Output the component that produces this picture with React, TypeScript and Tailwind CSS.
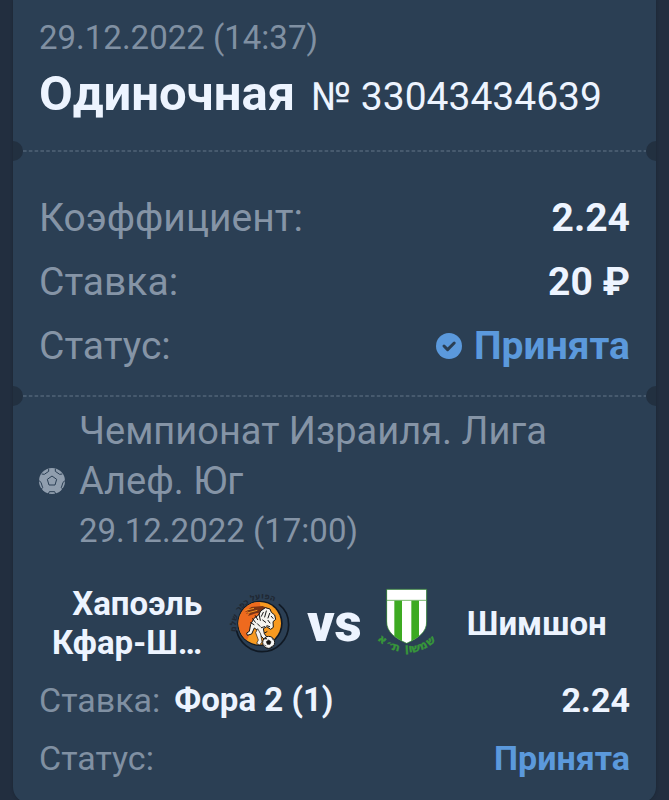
import type { ReactNode } from 'react';

function Divider() {
  return (
    <div className="relative h-5">
      <span className="absolute top-0 -left-2.5 size-5 rounded-full bg-[#223040]" />
      <span className="absolute top-0 -right-2.5 size-5 rounded-full bg-[#223040]" />
      <svg className="absolute inset-x-2.5 top-[9px] h-0.5 w-[calc(100%-20px)]" aria-hidden="true">
        <line x1="0" y1="1" x2="100%" y2="1" stroke="#475a6e" strokeWidth="2" strokeDasharray="3.6 2.2" />
      </svg>
    </div>
  );
}

function CheckBadge() {
  return (
    <svg viewBox="0 0 26 26" className="size-[26px]" aria-hidden="true">
      <circle cx="13" cy="13" r="13" fill="#5b99dc" />
      <path
        d="M8 13l3.6 3.6 6.6-6.6"
        fill="none"
        stroke="#2b3f54"
        strokeWidth="3"
        strokeLinecap="round"
        strokeLinejoin="round"
      />
    </svg>
  );
}

function BallIcon() {
  return (
    <svg viewBox="0 0 78 78" className="size-[26px] shrink-0" aria-hidden="true">
      <circle cx="39" cy="39" r="39" fill="#909eae" />
      <g fill="none" stroke="#2b3f54" strokeWidth="3" strokeLinejoin="round">
        <path d="M39 24l14 10-5 17H30l-5-17z" />
        <path d="M8 18l8 1 13-9 0-8" />
        <path d="M70 18l-8 1-13-9 0-8" />
        <path d="M0 38l6 5 5 16-5 5" />
        <path d="M78 38l-6 5-5 16 5 5" />
        <path d="M28 78l3-7h16l3 7" />
      </g>
    </svg>
  );
}

const homeLetters = [
  { char: 'ם', x: 54, y: 147, angle: -84 },
  { char: 'ל', x: 54, y: 131, angle: -74 },
  { char: 'ש', x: 57, y: 115, angle: -65 },
  { char: 'ר', x: 68, y: 91, angle: -48 },
  { char: 'פ', x: 77, y: 81, angle: -40 },
  { char: 'כ', x: 88, y: 72, angle: -30 },
  { char: 'ל', x: 106, y: 61, angle: -16 },
  { char: 'ע', x: 120, y: 57, angle: -6 },
  { char: 'ו', x: 133, y: 55, angle: 2 },
  { char: 'פ', x: 146, y: 57, angle: 10 },
  { char: 'ה', x: 162, y: 61, angle: 18 },
];

function HomeLogo() {
  return (
    <svg
      viewBox="30 23 198 213"
      className="h-[71px] w-[66px] shrink-0 overflow-visible"
      role="img"
      aria-label="Хапоэль Кфар-Шалем"
    >
      <path
        d="M56 152c8 34 40 62 76 62 44 0 80-36 80-81 0-24-10-46-28-60"
        fill="none"
        stroke="#101924"
        strokeWidth="5"
        strokeLinecap="round"
      />
      <circle cx="126" cy="129" r="68" fill="#101924" />
      <circle cx="125" cy="129" r="64" fill="#f79a20" />
      <path d="M125 65a64 64 0 0 0-38 115l24-54 20-30z" fill="#ee6a1e" />
      <path d="M80 96l20-16 34-3 18 8-18 4 10 6-30 4-24 8 6-10-12 4 8-9z" fill="#7a3414" />
      <path d="M82 90l26-6M88 98l30-8" stroke="#f5941f" strokeWidth="3" />
      <path
        d="M128 92l14-10 14 4 4 10 10 8 3 13-8 7 1 17-8 6-12-8-10 6 3 15 15 20-8 5-17-18-7-14-13-10-8 18-13 4-2-7 8-5 4-21 10-18 14-10z"
        fill="#f6f4ef"
        stroke="#161616"
        strokeWidth="3"
        strokeLinejoin="round"
      />
      <path
        d="M136 96l-6 12M145 92l-5 18M155 99l-5 14M112 106l7 12M104 115l8 11M98 127l10 6M123 101l4 19M134 119l9 7M150 120l6 8M130 142l10-3M118 130l8 8M140 158l7-4M160 108l5 6M147 136l8 3"
        stroke="#161616"
        strokeWidth="3"
        strokeLinecap="round"
      />
      <path d="M119 145l9 16 4 24-7 9-9-5 5-10-8-22z" fill="#f6f4ef" stroke="#161616" strokeWidth="2" />
      <circle cx="152" cy="186" r="18" fill="#f8f8f6" stroke="#161616" strokeWidth="3" />
      <path
        d="M152 179l7 5-3 8h-8l-3-8zM138 177l6-5 3 5M166 180l-4-7M139 194l6 3M157 201l7-5"
        fill="#161616"
        stroke="#161616"
        strokeWidth="2"
      />
      <g className="font-['DejaVu_Sans'] text-[25px] font-bold" fill="#202833" textAnchor="middle">
        {homeLetters.map((letter) => (
          <text key={letter.x + letter.char} transform={`translate(${letter.x} ${letter.y}) rotate(${letter.angle})`}>
            {letter.char}
          </text>
        ))}
      </g>
    </svg>
  );
}

const awayLetters = [
  { char: 'א', x: 49, y: 186, angle: 38 },
  { char: '״', x: 72, y: 204, angle: 28 },
  { char: 'ת', x: 94, y: 211, angle: 14 },
  { char: 'ן', x: 129, y: 214, angle: -3 },
  { char: 'ו', x: 141, y: 216, angle: -8 },
  { char: 'ש', x: 158, y: 214, angle: -14 },
  { char: 'מ', x: 182, y: 205, angle: -26 },
  { char: 'ש', x: 206, y: 190, angle: -36 },
];

function AwayLogo() {
  return (
    <svg
      viewBox="33 23 198 213"
      className="h-[71px] w-[66px] shrink-0 overflow-visible"
      role="img"
      aria-label="Шимшон"
    >
      <clipPath id="shield">
        <path d="M68 27h120v96c0 34-26 50-60 66-34-16-60-32-60-66z" />
      </clipPath>
      <g clipPath="url(#shield)">
        <path d="M68 27h120v165H68z" fill="#fff" />
        <path d="M91 60h23v132H91zM142 60h23v132h-23z" fill="#3daa22" />
        <path d="M68 60h120" stroke="#79b96d" strokeWidth="3" />
      </g>
      <path
        d="M68 27h120v96c0 34-26 50-60 66-34-16-60-32-60-66z"
        fill="none"
        stroke="#3d9a35"
        strokeWidth="2"
      />
      <g
        className="font-['DejaVu_Sans'] text-[34px] font-bold"
        fill="#37963a"
        stroke="#37963a"
        strokeWidth="1"
        textAnchor="middle"
      >
        {awayLetters.map((letter) => (
          <text key={letter.x} transform={`translate(${letter.x} ${letter.y}) rotate(${letter.angle})`}>
            {letter.char}
          </text>
        ))}
      </g>
    </svg>
  );
}

function SummaryRow({ label, children }: { label: string; children: ReactNode }) {
  return (
    <div className="flex h-16 items-center justify-between text-[39px]">
      <dt className="text-[#8594a6]">{label}</dt>
      <dd className="flex items-center gap-3 font-bold">{children}</dd>
    </div>
  );
}

export default function App() {
  return (
    <div className="min-h-screen bg-[#222e3f] px-[13px] font-[Roboto,'Noto_Sans',sans-serif] text-[#edf4ff]">
      <main className="overflow-hidden rounded-b-2xl bg-[#2b3f54] shadow-[0_0_3px_#1a2532]">
        <header className="px-[26px] pt-4 pb-2.5">
          <time className="block text-[33px] leading-[44px] text-[#8090a2]">29.12.2022 (14:37)</time>
          <div className="flex items-baseline gap-4 leading-[67px] whitespace-nowrap">
            <h1 className="text-[49px] font-bold">Одиночная</h1>
            <span className="text-[39px]">№ 33043434639</span>
          </div>
        </header>

        <Divider />

        <dl className="px-[26px] pt-[25px] pb-2">
          <SummaryRow label="Коэффициент:">2.24</SummaryRow>
          <SummaryRow label="Ставка:">20 ₽</SummaryRow>
          <SummaryRow label="Статус:">
            <CheckBadge />
            <span className="text-[#5b99dc]">Принята</span>
          </SummaryRow>
        </dl>

        <Divider />

        <section className="px-[26px] pb-4">
          <div className="flex items-center gap-3.5 text-[#8594a6]">
            <BallIcon />
            <div className="max-w-[500px]">
              <h2 className="text-[38px] leading-[50px]">Чемпионат Израиля. Лига Алеф. Юг</h2>
              <time className="block text-[33px] leading-[50px]">29.12.2022 (17:00)</time>
            </div>
          </div>

          <div className="flex items-center gap-[26px] pt-7 pb-[9px] text-[33px] leading-[39px] font-bold">
            <div className="flex-1 text-right">
              Хапоэль
              <br />
              Кфар-Ш…
            </div>
            <div className="flex items-center gap-[13px]">
              <HomeLogo />
              <span className="text-[53px] font-black">vs</span>
              <AwayLogo />
            </div>
            <div className="flex-1">Шимшон</div>
          </div>

          <dl className="text-[34px]">
            <div className="flex h-[58px] items-center justify-between">
              <dt className="flex items-center gap-3.5">
                <span className="text-[#8090a2]">Ставка:</span>
                <span className="text-[33px] font-bold">Фора 2 (1)</span>
              </dt>
              <dd className="font-bold">2.24</dd>
            </div>
            <div className="flex h-[58px] items-center justify-between">
              <dt className="text-[#8090a2]">Статус:</dt>
              <dd className="font-bold text-[#5b99dc]">Принята</dd>
            </div>
          </dl>
        </section>
      </main>
    </div>
  );
}
